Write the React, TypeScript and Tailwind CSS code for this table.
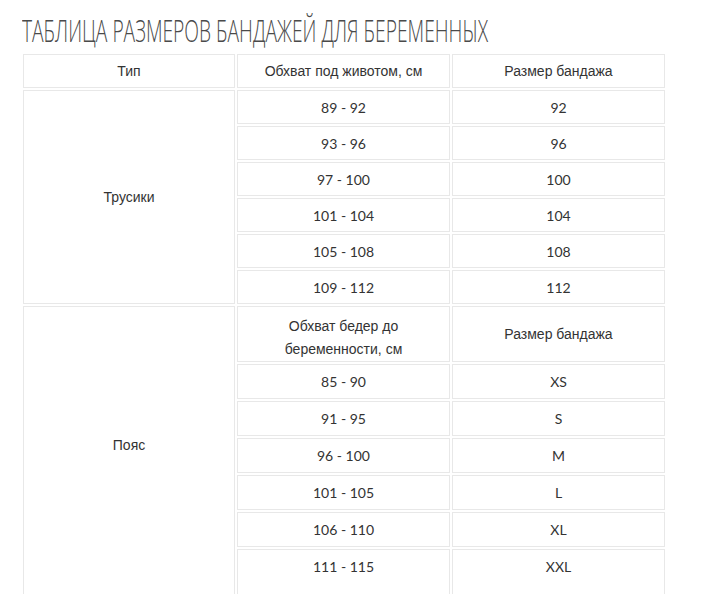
import React from "react";

const belly = [
  ["89 - 92", "92"],
  ["93 - 96", "96"],
  ["97 - 100", "100"],
  ["101 - 104", "104"],
  ["105 - 108", "108"],
  ["109 - 112", "112"],
];

const hips = [
  ["85 - 90", "XS"],
  ["91 - 95", "S"],
  ["96 - 100", "M"],
  ["101 - 105", "L"],
  ["106 - 110", "XL"],
  ["111 - 115", "XXL"],
];

const cell = "border border-[#e8e8e8] text-center align-middle p-0";
const label = "font-['Liberation_Sans',Arial,sans-serif] text-[14px] text-[#333]";
const num = "font-['Lato',sans-serif] text-[14px] text-[#333]";

export default function App() {
  return (
    <div className="w-[701px] h-[594px] bg-white overflow-hidden">
      <div className="pl-[22px] pt-[12px] h-[52px]">
        <h1 className="origin-left scale-x-[0.62] whitespace-nowrap font-['Open_Sans',sans-serif] font-light text-[31px] leading-[37px] text-[#4a4a4a]">
          ТАБЛИЦА РАЗМЕРОВ БАНДАЖЕЙ ДЛЯ БЕРЕМЕННЫХ
        </h1>
      </div>

      <table className="ml-[21px] border-separate border-spacing-[2px]">
        <tbody>
          <tr className="h-[34px]">
            <td className={`${cell} ${label} w-[212px]`}>Тип</td>
            <td className={`${cell} ${label} w-[213px]`}>Обхват под животом, см</td>
            <td className={`${cell} ${label} w-[213px]`}>Размер бандажа</td>
          </tr>
          {belly.map(([range, size], i) => (
            <tr key={range} className="h-[34px]">
              {i === 0 && (
                <td rowSpan={6} className={`${cell} ${label}`}>
                  Трусики
                </td>
              )}
              <td className={`${cell} ${num}`}>{range}</td>
              <td className={`${cell} ${num}`}>{size}</td>
            </tr>
          ))}
          <tr className="h-[56px]">
            <td rowSpan={7} className={`${cell} ${label}`}>
              <div className="-mt-[15px]">Пояс</div>
            </td>
            <td className={`${cell} ${label} leading-[23px] pt-[8px]`}>
              Обхват бедер до
              <br />
              беременности, см
            </td>
            <td className={`${cell} ${label}`}>Размер бандажа</td>
          </tr>
          {hips.map(([range, size], i) =>
            i < hips.length - 1 ? (
              <tr key={range} className="h-[35px]">
                <td className={`${cell} ${num}`}>{range}</td>
                <td className={`${cell} ${num}`}>{size}</td>
              </tr>
            ) : (
              <tr key={range} className="h-[50px]">
                <td className={`${cell} ${num} !align-top pt-[6px]`}>{range}</td>
                <td className={`${cell} ${num} !align-top pt-[6px]`}>{size}</td>
              </tr>
            )
          )}
        </tbody>
      </table>
    </div>
  );
}
